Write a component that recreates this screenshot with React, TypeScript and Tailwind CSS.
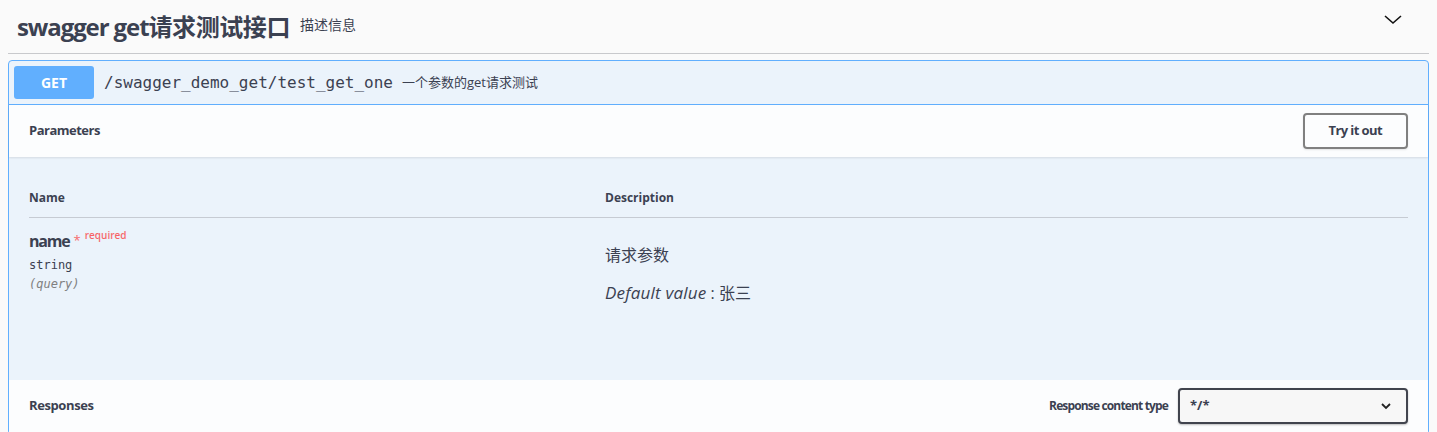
import React from "react";

export default function App() {
  return (
    <div className="min-h-screen bg-[#fafafa] px-2 text-[#3b4151]" style={{ fontFamily: '"Open Sans","Noto Sans CJK SC",sans-serif' }}>
      {/* Tag header */}
      <div className="flex h-[54px] items-center border-b border-[#c8c9cc] pl-[9px] pr-[26px]">
        <h3 className="flex items-center text-[24px] font-bold leading-none">
          <span className="tracking-[-1.1px]">swagger get</span>
          <span className="tracking-[-0.4px]">请求测试接口</span>
          <small className="ml-[10px] mt-[-4px] text-[14px] font-normal tracking-normal">描述信息</small>
        </h3>
        <div className="flex-1" />
        <svg width="20" height="20" viewBox="0 0 20 20" className="mt-[-13px]">
          <polyline points="2,6 10,13 18,6" fill="none" stroke="#111" strokeWidth="1.6" />
        </svg>
      </div>

      {/* Opblock */}
      <div className="mt-[6px] rounded-[4px] border border-[#61affe] bg-[#ebf3fb]">
        <div className="flex h-[44px] items-center border-b border-[#61affe] px-[5px]">
          <div className="flex h-[33px] w-[80px] items-center justify-center rounded-[3px] bg-[#61affe] text-[14px] font-bold text-white">
            GET
          </div>
          <span
            className="ml-[10px] text-[16px] text-[#3b4151]"
            style={{ fontFamily: '"DejaVu Sans Mono",monospace' }}
          >
            /swagger_demo_get/test_get_one
          </span>
          <span className="ml-[9px] text-[13px]">一个参数的get请求测试</span>
        </div>

        {/* Parameters header */}
        <div className="flex h-[52px] items-center bg-[#fcfdfe] px-[20px] shadow-[0_1px_2px_rgba(0,0,0,0.1)]">
          <h4 className="flex-1 text-[13px] font-bold tracking-[-0.5px]">Parameters</h4>
          <button className="h-[36px] rounded-[4px] border-2 border-[#808080] bg-transparent px-[24px] text-[13px] font-bold tracking-[-0.6px] shadow-[0_1px_2px_rgba(0,0,0,0.1)]">
            Try it out
          </button>
        </div>

        {/* Table */}
        <div className="h-[223px] px-[20px] pt-[21px]">
          <div className="flex h-[40px] items-center border-b border-[#c6cbd3] text-[12px] font-bold">
            <div className="w-[576px]">Name</div>
            <div>Description</div>
          </div>
          <div className="flex pt-[11px]">
            <div className="w-[576px]">
              <div className="flex items-start">
                <span className="text-[16px] font-bold leading-[24px] tracking-[-1.2px]">name</span>
                <span className="ml-[4px] mt-[-1px] text-[13px] leading-[24px] text-[#ff0000]/60">*</span>
                <span className="ml-[4px] mt-[-6px] text-[10px] font-semibold leading-[24px] text-[#ff0000]/60">required</span>
              </div>
              <div
                className="mt-[3px] text-[12px] leading-[18px]"
                style={{ fontFamily: '"DejaVu Sans Mono",monospace' }}
              >
                string
              </div>
              <div
                className="mt-[1px] text-[12px] italic leading-[18px] text-[#808080]"
                style={{ fontFamily: '"DejaVu Sans Mono",monospace' }}
              >
                (query)
              </div>
            </div>
            <div className="pt-[14px]">
              <p className="text-[16px] leading-[24px]">请求参数</p>
              <p className="mt-[14px] text-[17px] leading-[24px]">
                <i className="tracking-[0.2px]">Default value</i>
                <span className="text-[16px]"> : 张三</span>
              </p>
            </div>
          </div>
        </div>

        {/* Responses header */}
        <div className="flex h-[54px] items-start bg-[#fcfdfe] px-[20px] pt-[8px]">
          <h4 className="flex h-[36px] flex-1 items-center text-[13px] font-bold tracking-[-0.4px]">Responses</h4>
          <label className="mr-[10px] flex h-[36px] items-center text-[12px] font-bold tracking-[-0.85px]">Response content type</label>
          <div className="flex h-[36px] w-[230px] items-center justify-between rounded-[4px] border-2 border-[#41444e] bg-[#f7f7f7] pl-[10px] pr-[14px] shadow-[0_1px_2px_rgba(0,0,0,0.25)]">
            <span className="text-[13px] font-bold">*/*</span>
            <svg width="12" height="12" viewBox="0 0 12 12">
              <polyline points="2,4 6,8 10,4" fill="none" stroke="#222" strokeWidth="1.8" />
            </svg>
          </div>
        </div>
      </div>
    </div>
  );
}
